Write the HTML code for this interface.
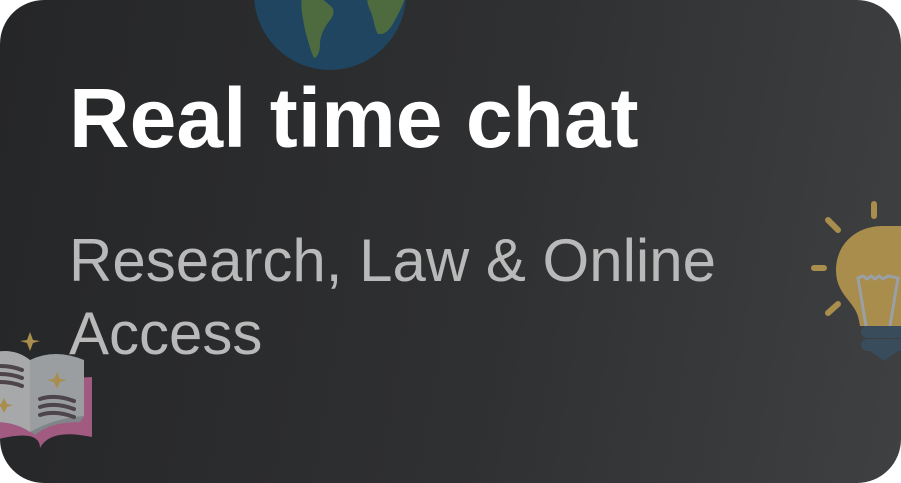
<!DOCTYPE html>
<html><head><meta charset="utf-8"><style>
html,body{margin:0;padding:0;background:#fff;width:901px;height:483px;overflow:hidden}
.card{position:absolute;left:0;top:0;width:901px;height:483px;border-radius:44px;overflow:hidden;
background:linear-gradient(100deg,#252628 0%,#2f3032 55%,#3f4042 100%)}
h1{position:absolute;left:69px;top:76px;margin:0;font:bold 84px/84px "Liberation Sans",sans-serif;color:#fff;white-space:nowrap}
p{position:absolute;left:69px;top:224px;margin:0;font:60px/73px "Liberation Sans",sans-serif;color:#b9b9b9;width:700px}
svg{position:absolute}
</style></head><body>
<div class="card">
<svg style="left:250px;top:-90px" width="160" height="162" viewBox="0 0 160 162">
<circle cx="80" cy="84" r="76" fill="#1f4560"/>
<path d="M52 88 C60 80,75 90,78 94 C85 98,85 104,80 110 C74 118,70 126,70 134 C70 142,67 148,64 148 C60 140,58 130,55 120 C53 108,50 98,52 88Z" fill="#4e6a3f"/>
<path d="M120 84 C135 86,150 80,155 88 C152 98,148 104,145 110 C140 120,135 125,128 124 C124 118,124 108,120 100 C118 95,115 88,120 84Z" fill="#4e6a3f"/>
</svg>
<h1>Real time chat</h1>
<p>Research, Law &amp; Online Access</p>
<svg style="left:808px;top:198px" width="93" height="162" viewBox="0 0 93 162">
<g stroke="#a88d4c" stroke-width="6" stroke-linecap="round">
<line x1="66" y1="6" x2="66" y2="18"/><line x1="20" y1="22" x2="30" y2="32"/>
<line x1="6" y1="70" x2="16" y2="70"/><line x1="20" y1="115" x2="30" y2="106"/></g>
<path d="M75 28 C46 28,28 48,28 72 C28 92,40 100,46 110 C50 116,51 122,52 128 L93 128 L93 28Z" fill="#a88d4c"/>
<path d="M58 128 L50 80 L55 78 L59 81 L63 78 L67 81 L71 78 L75 81 L80 78 L90 80 L82 128" fill="none" stroke="#9aa0a6" stroke-width="3"/>
<g fill="#394c5c"><rect x="53" y="128" width="46" height="12" rx="6"/><rect x="53" y="141" width="46" height="12" rx="6"/><path d="M62 153 L90 153 L76 163Z"/></g>
</svg>
<svg style="left:0;top:322px" width="100" height="135" viewBox="0 0 100 135">
<path d="M30 10 L33 18 L40 19 L33 21 L30 29 L27 21 L20 19 L27 18Z" fill="#a88d4c"/>
<path d="M-5 60 L-5 118 Q40 106 40 126 Q50 106 92 115 L92 55 Z" fill="#a15a80"/>
<path d="M-5 35 L-5 100 Q20 100 35 113 Q50 100 80 100 L84 94 L84 42 Q60 30 30 40 Q10 30 -5 35Z" fill="#808589"/>
<path d="M-5 30 Q15 26 30 38 L30 110 Q15 100 -5 100Z" fill="#a6a8aa"/>
<path d="M30 38 Q55 26 84 38 L84 94 Q55 96 30 110Z" fill="#9b9ea0"/>
<path d="M57 50 L60 57 L67 58 L60 60 L57 67 L54 60 L47 58 L54 57Z" fill="#a88d4c"/>
<path d="M4 76 L7 82 L13 83 L7 85 L4 91 L1 85 L-5 83 L1 82Z" fill="#a88d4c"/>
<g fill="none" stroke="#4d4549" stroke-width="4" stroke-linecap="round">
<path d="M0 44 Q12 44 22 48"/><path d="M0 52 Q12 52 22 56"/><path d="M0 60 Q12 60 22 64"/>
<path d="M40 77 Q55 72 74 79"/><path d="M40 85 Q55 80 74 87"/><path d="M40 93 Q55 88 74 95"/></g>
</svg>
</div>
</body></html>
